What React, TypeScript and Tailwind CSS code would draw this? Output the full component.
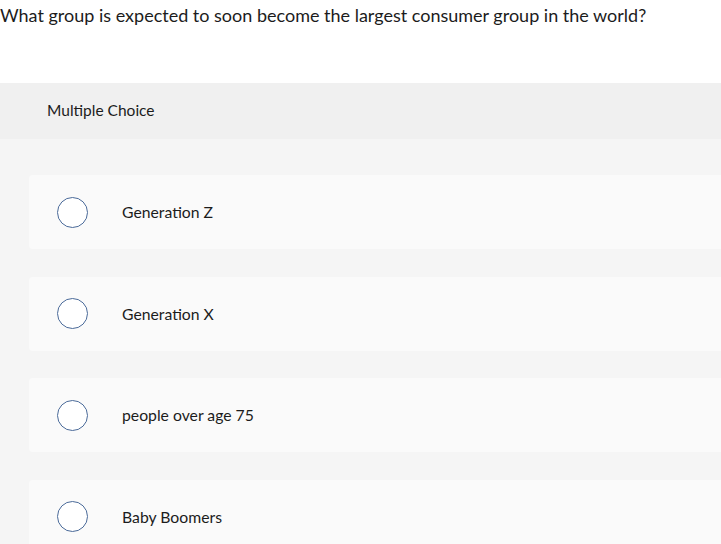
const options = ['Generation Z', 'Generation X', 'people over age 75', 'Baby Boomers']

export default function App() {
  return (
    <div className="h-[544px] w-[721px] overflow-hidden bg-white font-['Lato','Noto_Sans',sans-serif] text-[#1c1c1c]">
      <p className="pt-[3px] text-[18px] leading-[24px]">
        What group is expected to soon become the largest consumer group in the world?
      </p>

      <div className="mt-[56px] flex h-[56px] items-center bg-[#f0f0f0] pl-[47px] text-[15.5px]">
        Multiple Choice
      </div>

      <div className="flex flex-col gap-[27.5px] bg-[#f5f5f5] pl-[29px] pt-[36px] pb-10">
        {options.map((label) => (
          <label
            key={label}
            className="flex h-[74px] cursor-pointer items-center rounded-l-[4px] bg-[#fafafa] pl-[28px]"
          >
            <span className="h-[31px] w-[31px] shrink-0 rounded-full border-[1.5px] border-[#4a6a99] bg-white" />
            <span className="ml-[34px] text-[15.75px]">{label}</span>
          </label>
        ))}
      </div>
    </div>
  )
}
